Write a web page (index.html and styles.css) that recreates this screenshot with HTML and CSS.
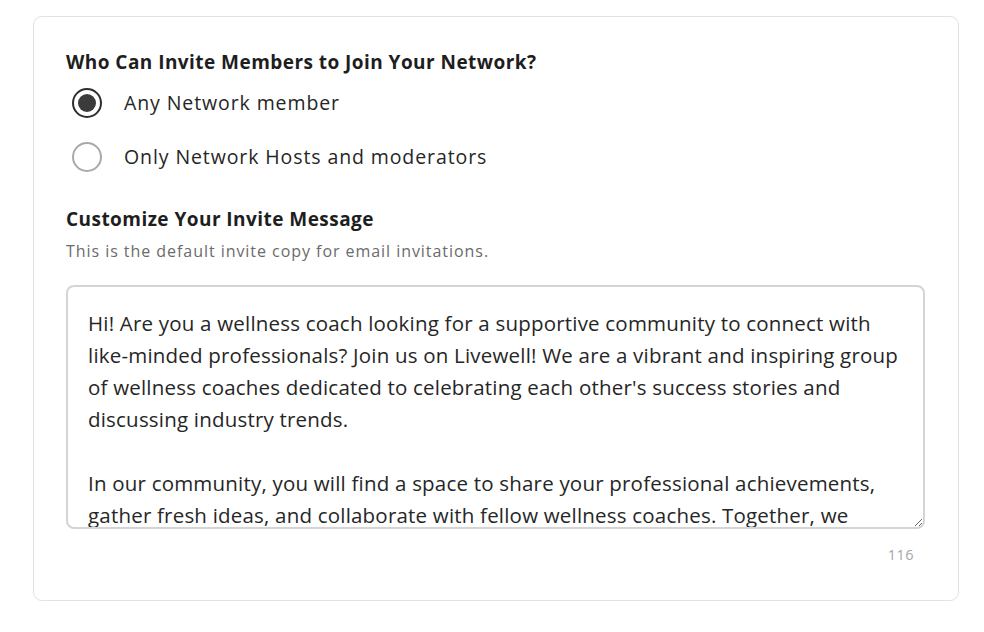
FILE: index.html
```html
<!DOCTYPE html>
<html lang="en">
<head>
<meta charset="utf-8">
<title>Invite settings</title>
<link rel="stylesheet" href="styles.css">
</head>
<body>
<div class="card">
  <h2 class="heading">Who Can Invite Members to Join Your Network?</h2>
  <div class="options">
    <label class="option">
      <span class="radio checked"><span class="dot"></span></span>
      <span class="option-label">Any Network member</span>
    </label>
    <label class="option">
      <span class="radio"></span>
      <span class="option-label">Only Network Hosts and moderators</span>
    </label>
  </div>
  <h2 class="heading heading-2">Customize Your Invite Message</h2>
  <p class="hint">This is the default invite copy for email invitations.</p>
  <textarea class="message" wrap="off">Hi! Are you a wellness coach looking for a supportive community to connect with
like-minded professionals? Join us on Livewell! We are a vibrant and inspiring group
of wellness coaches dedicated to celebrating each other's success stories and
discussing industry trends.

In our community, you will find a space to share your professional achievements,
gather fresh ideas, and collaborate with fellow wellness coaches. Together, we
can grow and learn from each other.</textarea>
  <div class="counter">116</div>
</div>
</body>
</html>
```

FILE: styles.css
```css
* { box-sizing: border-box; }
html, body { background: #ffffff; }
body {
  margin: 0;
  padding: 16px 0 0 33px;
  font-family: "Open Sans", "Noto Sans", sans-serif;
  color: #222222;
}
.card {
  width: 926px;
  height: 585px;
  border: 1px solid #e2e2e2;
  border-radius: 9px;
  padding: 32px 32px 0 32px;
  display: flex;
  flex-direction: column;
}
.heading {
  margin: 0;
  font-size: 19px;
  line-height: 26px;
  font-weight: 700;
  letter-spacing: 0.45px;
  color: #1e1e1e;
}
.options {
  display: flex;
  flex-direction: column;
  gap: 24px;
  margin-top: 13px;
}
.option {
  display: flex;
  align-items: center;
  gap: 22px;
  padding-left: 6px;
}
.radio {
  width: 30px;
  height: 30px;
  border-radius: 50%;
  border: 2px solid #a9a9a9;
  display: flex;
  align-items: center;
  justify-content: center;
  flex: none;
}
.radio.checked {
  border: 2.5px solid #2e2e2e;
}
.dot {
  width: 18px;
  height: 18px;
  border-radius: 50%;
  background: #3b3b3b;
}
.option-label {
  font-size: 19.5px;
  line-height: 30px;
  letter-spacing: 0.9px;
  color: #262626;
}
.heading-2 {
  margin-top: 34px;
}
.hint {
  margin: 9px 0 0 0;
  font-size: 16px;
  line-height: 20px;
  letter-spacing: 0.95px;
  color: #6b6b6b;
}
.message {
  margin-top: 24px;
  width: 859px;
  height: 244px;
  flex: none;
  border: 2px solid #d4d4d4;
  border-radius: 8px;
  padding: 20px 20px;
  font-family: inherit;
  font-size: 20.5px;
  line-height: 32px;
  letter-spacing: 0.2px;
  color: #262626;
  white-space: pre;
  overflow: hidden;
  resize: both;
  outline: none;
}
.counter {
  width: 848px;
  text-align: right;
  margin-top: 16px;
  font-size: 14.5px;
  line-height: 20px;
  letter-spacing: 0.5px;
  color: #a6a6ad;
}
```
